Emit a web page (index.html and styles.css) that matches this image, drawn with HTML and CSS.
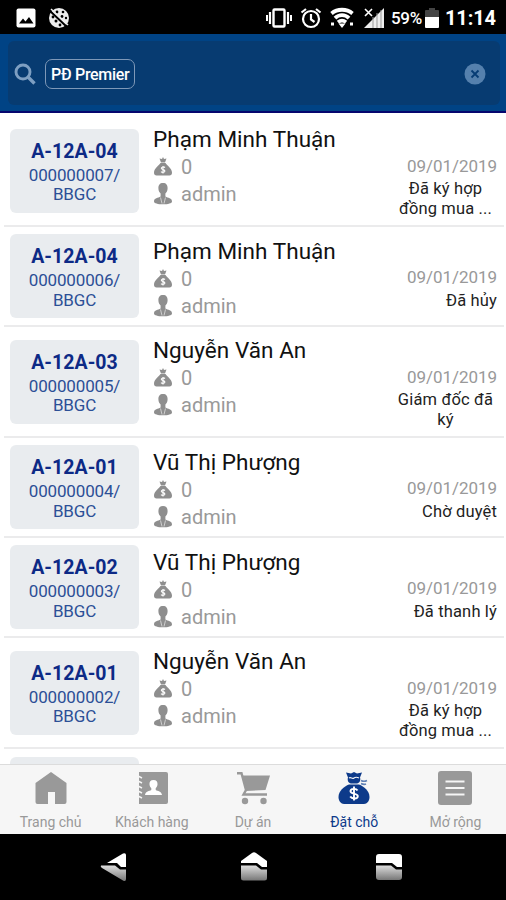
FILE: index.html
```html
<!DOCTYPE html>
<html lang="vi">

<head>
    <meta charset="UTF-8">
    <meta name="viewport" content="width=device-width, initial-scale=1.0">
    <title>Đặt chỗ</title>
    <link rel="stylesheet" href="styles.css">
</head>

<body>
    <svg class="sprite">
        <symbol id="icon-bag" viewBox="0 0 20 20">
            <path d="M6.500 1.500l2.500.5 1-2 1 2 2.500-.5-1.500 4H8z" />
            <path d="M7.500 6h5c1 2 6.500 5.500 6.500 9.500 0 2.200-1 3-2.500 3h-13C2 18.500 1 17.700 1 15.500 1 11.500 6.500 8 7.500 6z" />
            <path d="M12 10.500c-1-1-3.700-.8-3.700.8 0 1.700 3.600 1 3.600 2.700 0 1.600-2.800 1.700-3.900.6M10 9v7.500" fill="none" stroke="#fff" stroke-width="1.100" />
        </symbol>
        <symbol id="icon-user" viewBox="0 0 20 22">
            <path d="M10 0c3.300 0 4.600 2 4.600 5.200 0 2.500-1 4.200-2.200 5.200v3c2.500 1.500 6.600 1.300 6.600 5 0 1.800-4 2.900-9 2.900s-9-1.100-9-2.900c0-3.700 4.100-3.500 6.600-5v-3c-1.200-1-2.200-2.700-2.200-5.200C5.400 2 6.700 0 10 0z" />
            <path d="M7.500 14.500l1.500 6M12.500 14.500l-1.500 6" stroke="#ddd" stroke-width=".8" />
        </symbol>
    </svg>

    <div class="phone">
        <div class="status-bar">
            <div class="status-left">
                <svg width="20" height="20" viewBox="0 0 20 20">
                    <rect x="0.500" y="0.500" width="19" height="19" rx="2" fill="#fff" />
                    <path d="M3 15.500l4-5 2.500 3 3.500-4.500 4.500 6.500z" fill="#000" />
                </svg>
                <svg width="22" height="22" viewBox="0 0 22 22">
                    <circle cx="11" cy="11" r="10" fill="#eee" />
                    <g fill="#000">
                        <circle cx="9" cy="5" r="1.400" />
                        <circle cx="15" cy="5" r="1.300" />
                        <circle cx="5" cy="10" r="1.400" />
                        <circle cx="8" cy="14" r="1.500" />
                        <circle cx="14" cy="9.500" r="1.400" />
                        <circle cx="18" cy="11" r="1.200" />
                        <circle cx="12" cy="18" r="1.400" />
                    </g>
                    <path d="M1 3l18 17" stroke="#000" stroke-width="2" />
                    <path d="M3 2l17 16" stroke="#eee" stroke-width="1.500" />
                </svg>
            </div>
            <div class="status-right">
                <svg class="vibrate" width="28" height="22" viewBox="0 0 28 22" fill="none" stroke="#fff">
                    <rect x="8.500" y="2.500" width="11" height="17" rx="1" stroke-width="2.400" />
                    <path d="M5 5v12M23 5v12" stroke-width="2.200" />
                    <path d="M2 8v6M26 8v6" stroke-width="2" />
                </svg>
                <svg class="alarm" width="22" height="22" viewBox="0 0 22 22" fill="none" stroke="#fff" stroke-width="2.200">
                    <circle cx="11" cy="12" r="8" />
                    <path d="M11 7v5.500l3.500 2.500M1.500 5.500L6 2M20.500 5.500L16 2" />
                </svg>
                <svg class="wifi" width="26" height="22" viewBox="0 0 26 22" fill="none" stroke="#fff" stroke-width="3.800">
                    <path d="M2.500 6.500c6-5 15-5 21 0M6 11.200c4-4 10-4 14 0M9 15.200c2.500-2 5.500-2 8 0" />
                    <path d="M9.500 16.500h7L13 21z" fill="#fff" stroke="none" />
                    <path d="M2 17h3M21 17h3" stroke-width="3" />
                </svg>
                <svg class="signal" width="22" height="22" viewBox="0 0 22 22">
                    <path d="M21 1v20H1z" fill="#eee" />
                    <path d="M10 10v11M14 6v15M18 3v18" stroke="#999" stroke-width="1" />
                    <path d="M2 2l7 7M9 2L2 9" stroke="#fff" stroke-width="1.600" />
                </svg>
                <span class="percent">59%</span>
                <svg class="battery" width="14" height="22" viewBox="0 0 14 22">
                    <path d="M4 1h6v2h3a1 1 0 0 1 1 1v7H0V4a1 1 0 0 1 1-1h3z" fill="#444" />
                    <path d="M0 10h14v10a1 1 0 0 1-1 1H1a1 1 0 0 1-1-1z" fill="#fff" />
                </svg>
                <span class="clock">11:14</span>
            </div>
        </div>

        <div class="header">
            <div class="search">
                <svg width="22" height="22" viewBox="0 0 22 22" fill="none" stroke="#7e9fc2">
                    <circle cx="9" cy="9" r="7" stroke-width="2.900" />
                    <path d="M14 14l6.500 6.500" stroke-width="3.400" />
                </svg>
                <span class="tag">PĐ Premier</span>
                <svg class="clear" width="22" height="22" viewBox="0 0 22 22">
                    <circle cx="11" cy="11" r="10.500" fill="#5580ad" />
                    <path d="M7.500 7.500l7 7M14.500 7.500l-7 7" stroke="#073c74" stroke-width="1.800" />
                </svg>
            </div>
        </div>

        <div class="list" id="list"></div>

        <div class="tabs">
            <div class="tab">
                <svg width="36" height="36" viewBox="0 0 36 36">
                    <path d="M18 2l15.500 11v19a2 2 0 0 1-2 2H22V22h-7v12H4.500a2 2 0 0 1-2-2V13z" />
                </svg>
                <span>Trang chủ</span>
            </div>
            <div class="tab">
                <svg width="36" height="36" viewBox="0 0 36 36">
                    <path d="M5 2h27a2 2 0 0 1 2 2v28a2 2 0 0 1-2 2H5z" />
                    <path d="M3 5.500l5 2.500M3 10.500l5 2.500M3 15.500l5 2.500M3 20.500l5 2.500M3 25.500l5 2.500" stroke="#f6f6f6" stroke-width="1.500" />
                    <path d="M19.500 10c3 0 4.300 2 4 4.500-.2 2-1 3-1.800 3.700v1.800c2 1.200 5.800 1 6.300 5H11c.5-4 4.300-3.800 6.300-5v-1.800c-.8-.7-1.600-1.700-1.800-3.700-.3-2.500 1-4.500 4-4.500z" fill="#fff" />
                </svg>
                <span>Khách hàng</span>
            </div>
            <div class="tab">
                <svg width="36" height="36" viewBox="0 0 36 36">
                    <path d="M7.500 5.500H35L30.500 20 11 21z" />
                    <path d="M2 3.300h4.500L11 20l-2.500 4.500H32" fill="none" stroke="#999" stroke-width="2.400" />
                    <circle cx="10" cy="31" r="3.200" />
                    <circle cx="28.500" cy="31" r="3.200" />
                </svg>
                <span>Dự án</span>
            </div>
            <div class="tab active">
                <svg width="36" height="36" viewBox="0 0 36 36">
                    <path d="M10 2.500l5 1L18 2l3 1.500 5-1-2 5c1 3-.5 5.500-3 6h-6c-2.500-.5-4-3-3-6z" />
                    <path d="M13 8c2-1.500 3 1.500 5 0s3-1 5 0" stroke="#f6f6f6" stroke-width="1.200" fill="none" />
                    <path d="M25 10.500q3 1.500 6 0M25 13.500q3 1.500 5 .5" fill="none" stroke="#5f80b5" stroke-width="1.600" />
                    <path d="M13 14.500h10c5 2 10.500 6.500 10.500 12.500 0 4-2.500 7-5.500 7H8c-3 0-5.500-3-5.500-7 0-6 5.500-10.500 10.500-12.500z" />
                    <path d="M21.500 20.500c-1.500-2.500-7-2-7 .8 0 3 7.300 1.700 7.300 4.900 0 2.800-5.800 3.200-7.600.4M18 16.500v14" fill="none" stroke="#fff" stroke-width="1.900" />
                </svg>
                <span>Đặt chỗ</span>
            </div>
            <div class="tab">
                <svg width="36" height="36" viewBox="0 0 36 36">
                    <rect x="1" y="1" width="34" height="34" rx="3" />
                    <path d="M8.500 11.500h19M8.500 18h19M8.500 24.500h19" stroke="#f6f6f6" stroke-width="2.200" />
                </svg>
                <span>Mở rộng</span>
            </div>
        </div>

        <div class="nav-bar">
            <svg class="back" width="28" height="30" viewBox="0 0 28 30">
                <path d="M7 11L23 1.500q3-1 3 1.500v12h-5l-4-4z" fill="#fff" />
                <path d="M1 13.500h14l5 4h6V27q0 3-3 1.500L2 16q-2-1.500-1-2.500z" fill="url(#metal)" />
            </svg>
            <svg width="28" height="30" viewBox="0 0 28 30">
                <path d="M1 11V9L12 1q2-1.500 4 0l11 8v6h-5l-5-4z" fill="#fff" />
                <path d="M1 13.500h15l5 4h6V26q0 2.500-2.500 2.500h-21Q1 28.500 1 26z" fill="url(#metal)" />
            </svg>
            <svg width="28" height="30" viewBox="0 0 28 30">
                <defs>
                    <linearGradient id="metal" x1="0" y1="0" x2="0" y2="1">
                        <stop offset="0" stop-color="#ddd" />
                        <stop offset="1" stop-color="#777" />
                    </linearGradient>
                </defs>
                <path d="M1 11V5q0-3 3-3h20q3 0 3 3v10h-5l-5-4z" fill="#fff" />
                <path d="M1 13.500h15l5 4h6V25q0 3-3 3H4q-3 0-3-3z" fill="url(#metal)" />
            </svg>
        </div>
    </div>

    <script>
        const bookings = [
            { unit: 'A-12A-04', code: '000000007/', name: 'Phạm Minh Thuận', status: ['Đã ký hợp', 'đồng mua ...'] },
            { unit: 'A-12A-04', code: '000000006/', name: 'Phạm Minh Thuận', status: ['Đã hủy'] },
            { unit: 'A-12A-03', code: '000000005/', name: 'Nguyễn Văn An', status: ['Giám đốc đã', 'ký'] },
            { unit: 'A-12A-01', code: '000000004/', name: 'Vũ Thị Phượng', status: ['Chờ duyệt'] },
            { unit: 'A-12A-02', code: '000000003/', name: 'Vũ Thị Phượng', status: ['Đã thanh lý'] },
            { unit: 'A-12A-01', code: '000000002/', name: 'Nguyễn Văn An', status: ['Đã ký hợp', 'đồng mua ...'] }
        ];

        const list = document.getElementById('list');
        bookings.forEach((item) => {
            const row = document.createElement('div');
            row.className = item.status.length > 1 ? 'row tall' : 'row';
            row.innerHTML = `
                <div class="card">
                    <div class="unit">${item.unit}</div>
                    <div class="code">${item.code}<br>BBGC</div>
                </div>
                <div class="info">
                    <div class="name">${item.name}</div>
                    <div class="meta"><svg width="20" height="20"><use href="#icon-bag" /></svg><span>0</span></div>
                    <div class="meta"><svg width="20" height="22"><use href="#icon-user" /></svg><span>admin</span></div>
                </div>
                <div class="side">
                    <div class="date">09/01/2019</div>
                    <div class="state">${item.status.join('<br>')}</div>
                </div>
            `;
            list.appendChild(row);
        });

        // top edge of the next row, cut off by the tab bar
        const next = document.createElement('div');
        next.className = 'row next';
        next.innerHTML = '<div class="card"></div>';
        list.appendChild(next);
    </script>
</body>

</html>
```
FILE: styles.css
```css
body {
    margin: 0;
    background: #fff;
    font-family: Roboto, 'Liberation Sans', sans-serif;
}

svg {
    display: block;
    flex-shrink: 0;
}

.sprite {
    display: none;
}

.phone {
    width: 506px;
    height: 900px;
    display: flex;
    flex-direction: column;
    overflow: hidden;
}

.status-bar {
    height: 34px;
    flex-shrink: 0;
    box-sizing: border-box;
    padding: 1px 10px 0 16px;
    background: #000;
    color: #fff;
    display: flex;
    justify-content: space-between;
    align-items: center;
}

.status-left,
.status-right {
    display: flex;
    align-items: center;
}

.status-left {
    gap: 12px;
}

.vibrate,
.alarm {
    margin-right: 7px;
}

.wifi {
    margin-right: 8px;
}

.signal {
    margin-right: 6px;
}

.battery {
    margin-right: 6px;
}

.percent {
    width: 32px;
    margin-right: 2px;
    font-size: 17px;
    font-weight: 500;
    letter-spacing: -0.3px;
}

.clock {
    font-size: 20px;
    font-weight: bold;
    letter-spacing: -0.1px;
}

.header {
    height: 79px;
    flex-shrink: 0;
    box-sizing: border-box;
    padding: 7px 6px 6px 8px;
    background: #004385;
    border-bottom: 2px solid #06066e;
}

.search {
    height: 64px;
    box-sizing: border-box;
    padding: 2px 14px 0 6px;
    border-radius: 6px;
    background: #073b71;
    display: flex;
    align-items: center;
}

.tag {
    height: 30px;
    box-sizing: border-box;
    margin-left: 9px;
    padding: 0 5px;
    border: 1.5px solid #7e98b8;
    border-radius: 7px;
    color: #fff;
    font-size: 16px;
    font-weight: 500;
    line-height: 30px;
    letter-spacing: -0.3px;
}

.clear {
    margin-left: auto;
}

.list {
    flex: 1;
    min-height: 0;
    padding: 3px 2px 0 4px;
    overflow: hidden;
}

.row {
    height: 100px;
    box-sizing: border-box;
    padding: 0 7px 0 6px;
    border-bottom: 2px solid #ebebec;
    display: flex;
    align-items: center;
}

.row.tall {
    height: 111px;
}

.row.next {
    align-items: flex-start;
    padding-top: 8px;
    border: none;
}

.card {
    width: 129px;
    height: 84px;
    box-sizing: border-box;
    padding-top: 11px;
    border-radius: 6px;
    background: #e9ecef;
    text-align: center;
    flex-shrink: 0;
}

.unit {
    color: #0d2a86;
    font-size: 19.5px;
    font-weight: bold;
    line-height: 24px;
    letter-spacing: 0.05px;
}

.code {
    margin-top: 2px;
    color: #2c4f96;
    font-size: 17px;
    line-height: 19.5px;
    letter-spacing: -0.15px;
}

.info {
    flex: 1;
    align-self: flex-start;
    padding: 10px 0 0 14px;
}

.tall .info {
    padding-top: 9px;
}

.name {
    color: #111;
    font-size: 22.5px;
    line-height: 28px;
    letter-spacing: 0.05px;
    white-space: nowrap;
}

.meta {
    height: 27px;
    display: flex;
    align-items: center;
    gap: 8px;
    color: #999;
    font-size: 20px;
}

.meta svg {
    fill: #8e8e8e;
}

.side {
    align-self: flex-start;
    padding-top: 40px;
    display: flex;
    flex-direction: column;
    align-items: flex-end;
}

.date {
    color: #999;
    font-size: 17px;
    line-height: 21px;
    letter-spacing: -0.05px;
}

.state {
    margin-top: 3px;
    color: #222;
    font-size: 16.5px;
    line-height: 20px;
    letter-spacing: 0.15px;
    text-align: center;
    white-space: nowrap;
}

.tall .state {
    width: 103px;
    margin-top: 2px;
}

.tabs {
    height: 70px;
    flex-shrink: 0;
    box-sizing: border-box;
    border-top: 1px solid #dcdcdc;
    background: #f6f6f6;
    display: flex;
}

.tab {
    flex: 1;
    padding-top: 5px;
    display: flex;
    flex-direction: column;
    align-items: center;
    gap: 7px;
    color: #999;
    fill: #999;
    font-size: 14px;
    line-height: 18px;
}

.tab.active {
    color: #0d3a8a;
    fill: #0d3a8a;
}

.nav-bar {
    height: 66px;
    flex-shrink: 0;
    box-sizing: border-box;
    padding-left: 100px;
    background: #000;
    display: flex;
    align-items: center;
    gap: 107px;
}

.nav-bar .back {
    margin-right: 5px;
}
```
